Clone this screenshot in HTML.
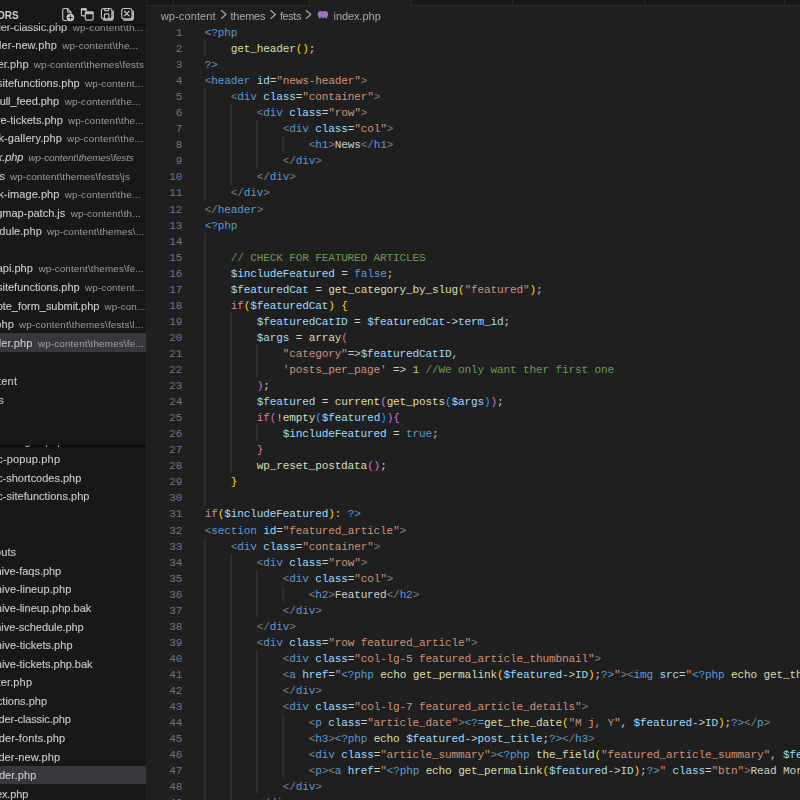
<!DOCTYPE html>
<html lang="en">
<head>
<meta charset="utf-8">
<title>index.php - Visual Studio Code</title>
<style>
html,body{margin:0;padding:0;width:800px;height:800px;overflow:hidden;background:#1f1f1f}
body{position:relative;font-family:"Liberation Sans",sans-serif;color:#ccc;-webkit-font-smoothing:antialiased}
#sidebar{will-change:transform;position:absolute;left:0;top:0;width:146px;height:800px;background:#181818;overflow:hidden;border-right:1px solid #232323}
#editor{position:absolute;left:147px;top:0;width:653px;height:800px;background:#1f1f1f;overflow:hidden}
.row{position:absolute;left:0;width:146px;height:19px;line-height:19px;white-space:pre;overflow:hidden}
.selbg{position:absolute;left:0;width:146px;height:18.583px;background:#37373d}
.nm{position:absolute;top:0;white-space:pre;font-family:"Liberation Sans",sans-serif;font-size:11.0px;color:#cccccc;-webkit-text-stroke:0.1px #cccccc;}
.ds{position:absolute;top:0.38px;white-space:pre;font-family:"Liberation Sans",sans-serif;font-size:9.9px;color:rgba(204,204,204,.72)}
.it{font-style:italic}
#hdr{position:absolute;left:0;top:0;width:146px;height:24px;overflow:hidden}
#hdr .ttl{position:absolute;right:127.4px;top:10px;font-size:10px;font-weight:bold;line-height:12px;color:#ccc;white-space:pre;letter-spacing:0px}
.shadow{position:absolute;left:0;width:146px;height:3px;background:linear-gradient(#000000aa,#00000000)}
.tabs{position:absolute;top:0;height:5px;background:#181818;border-bottom:1px solid #2b2b2b;overflow:hidden}
.tabs i{position:absolute;top:0;width:1px;height:5px;background:#2b2b2b}
#crumbs{will-change:transform;position:absolute;left:0;top:7px;height:18px;line-height:18px;font-size:11px;color:#a9a9a9;white-space:pre}
#crumbs span{position:absolute;top:0;letter-spacing:0.12px}
#crumbs svg{position:absolute}
.ln{position:absolute;left:0;width:35.3px;text-align:right;height:16px;line-height:16px;color:#6e7681;font-family:"Liberation Mono",monospace;font-size:11.1px;letter-spacing:-0.161px;white-space:pre}
.cl{-webkit-text-stroke:0px;position:absolute;left:57.7px;height:16px;line-height:16px;color:#ccc;font-family:"Liberation Mono",monospace;font-size:11.1px;letter-spacing:-0.161px;white-space:pre}
.gd{position:absolute;width:2px;background:#2e2e2e}
.k{color:#569cd6}.f{color:#dcdcaa}.g{color:#808080}.a{color:#9cdcfe}.s{color:#ce9178}.v{color:#9cdcfe}.c{color:#c586c0}.n{color:#b5cea8}.m{color:#6a9955}.b1{color:#ffd700}.b2{color:#da70d6}.b3{color:#179fff}
.ico{position:absolute}
</style>
</head>
<body>
<div id="sidebar">
<div id="hdr"><span class="ttl">OPEN EDITORS</span>
<svg class="ico" style="left:0;top:0" width="146" height="24" viewBox="0 0 146 24" fill="none" stroke="#c0c0c0" stroke-width="1.15" stroke-linecap="round" stroke-linejoin="round">
<path d="M67.4 8.5H64.4Q62.7 8.5 62.7 10.2V18.8Q62.7 20.5 64.4 20.5H66.6"/>
<path d="M67.4 8.5L71 12.1V13.6"/>
<path d="M67.4 8.7V11.3Q67.4 12.1 68.2 12.1H70.8"/>
<circle cx="70.4" cy="17.5" r="3.8" fill="#cdcdcd" stroke="none"/>
<path d="M70.5 15.2V19.8M68.2 17.5H72.8" stroke="#2a2a2a" stroke-width="1" stroke-linecap="butt"/>
<rect x="81.4" y="8.8" width="4.9" height="7.1" rx="1.3"/>
<rect x="81.4" y="8.8" width="4.9" height="1" rx="0.5" fill="#c0c0c0"/>
<rect x="85.3" y="12.1" width="7.8" height="8" rx="1.6" fill="#181818"/>
<rect x="85.3" y="12.1" width="7.8" height="1.5" rx="0.7" fill="#c0c0c0"/>
<rect x="101.4" y="8.5" width="10.5" height="10.4" rx="2.3"/>
<path d="M104.7 8.7V10.6H108.6V8.7"/>
<path d="M104.4 18.7V14.7Q104.4 13.9 105.2 13.9H108.1Q108.9 13.9 108.9 14.7V18.7"/>
<path d="M113.1 11.3V17.4Q113.1 20 110.5 20H103.8" stroke-width="1.6"/>
<rect x="121.7" y="8.5" width="10.3" height="10.4" rx="2.3"/>
<path d="M124.5 11.3L129.1 15.9M129.1 11.3L124.5 15.9" stroke-width="1.3"/>
<path d="M133.2 11.3V17.4Q133.2 20 130.6 20H123.9" stroke-width="1.6"/>
</svg>
</div>
<div class="row" style="top:18px"><span class="nm" style="right:79.02px;letter-spacing:-0.118px">header-classic.php</span><span class="ds" style="left:72.75px;letter-spacing:0.196px">wp-content\th...</span></div>
<div class="row" style="top:36px"><span class="nm" style="right:89.09px;letter-spacing:0.108px">header-new.php</span><span class="ds" style="left:62.25px;letter-spacing:0.184px">wp-content\the...</span></div>
<div class="row" style="top:55px"><span class="nm" style="right:117.43px;letter-spacing:0.073px">footer.php</span><span class="ds" style="left:33.75px;letter-spacing:0.140px">wp-content\themes\fests</span></div>
<div class="row" style="top:74px"><span class="nm" style="right:66.28px;letter-spacing:0.016px">etc-sitefunctions.php</span><span class="ds" style="left:85.00px;letter-spacing:0.143px">wp-content...</span></div>
<div class="row" style="top:92px"><span class="nm" style="right:87.05px;letter-spacing:-0.053px">pull_feed.php</span><span class="ds" style="left:64.70px;letter-spacing:0.170px">wp-content\the...</span></div>
<div class="row" style="top:111px"><span class="nm" style="right:83.20px;letter-spacing:0.002px">archive-tickets.php</span><span class="ds" style="left:68.00px;letter-spacing:0.176px">wp-content\the...</span></div>
<div class="row" style="top:129px"><span class="nm" style="right:84.00px;letter-spacing:0.103px">block-gallery.php</span><span class="ds" style="left:67.10px;letter-spacing:0.193px">wp-content\the...</span></div>
<div class="row" style="top:148px"><span class="nm it" style="right:122.68px;letter-spacing:-0.081px">index.php</span><span class="ds it" style="left:28.50px;letter-spacing:-0.080px">wp-content\themes\fests</span></div>
<div class="row" style="top:167px"><span class="nm" style="right:141.32px;letter-spacing:-0.320px">scripts.js</span><span class="ds" style="left:9.90px;letter-spacing:0.123px">wp-content\themes\fests\js</span></div>
<div class="row" style="top:185px"><span class="nm" style="right:86.54px;letter-spacing:0.059px">block-image.php</span><span class="ds" style="left:64.70px;letter-spacing:0.170px">wp-content\the...</span></div>
<div class="row" style="top:204px"><span class="nm" style="right:80.76px;letter-spacing:-0.005px">acf-gmap-patch.js</span><span class="ds" style="left:70.70px;letter-spacing:0.174px">wp-content\th...</span></div>
<div class="row" style="top:222px"><span class="nm" style="right:104.16px;letter-spacing:0.039px">schedule.php</span><span class="ds" style="left:46.90px;letter-spacing:0.147px">wp-content\themes\...</span></div>
<div class="row" style="top:259px"><span class="nm" style="right:113.19px;letter-spacing:0.011px">api.php</span><span class="ds" style="left:38.40px;letter-spacing:0.128px">wp-content\themes\fe...</span></div>
<div class="row" style="top:278px"><span class="nm" style="right:66.28px;letter-spacing:0.016px">etc-sitefunctions.php</span><span class="ds" style="left:85.00px;letter-spacing:0.143px">wp-content...</span></div>
<div class="row" style="top:297px"><span class="nm" style="right:46.63px;letter-spacing:-0.033px">vote_form_submit.php</span><span class="ds" style="left:104.60px;letter-spacing:0.069px">wp-con...</span></div>
<div class="row" style="top:315px"><span class="nm" style="right:131.75px;letter-spacing:0.247px">lineup.php</span><span class="ds" style="left:19.10px;letter-spacing:0.146px">wp-content\themes\fests\l...</span></div>
<div class="selbg" style="top:333.21px"></div>
<div class="row" style="top:334px"><span class="nm" style="right:113.49px;letter-spacing:0.112px">header.php</span><span class="ds" style="left:37.90px;letter-spacing:0.150px">wp-content\themes\fe...</span></div>
<div class="row" style="top:372px"><span class="nm" style="right:128.74px;letter-spacing:0.258px">wp-content</span></div>
<div class="row" style="top:391px"><span class="nm" style="right:143.14px;letter-spacing:-0.844px">themes</span></div>
<div class="shadow" style="top:444.6px"></div>
<div class="row" style="top:432px;clip-path:inset(13.40px 0 0 0)"><span class="nm" style="right:82.55px;letter-spacing:-0.049px">etc-images.php</span></div>
<div class="row" style="top:450px"><span class="nm" style="right:85.84px;letter-spacing:0.159px">etc-popup.php</span></div>
<div class="row" style="top:469px"><span class="nm" style="right:64.77px;letter-spacing:-0.018px">etc-shortcodes.php</span></div>
<div class="row" style="top:487px"><span class="nm" style="right:56.47px;letter-spacing:0.030px">etc-sitefunctions.php</span></div>
<div class="row" style="top:543px"><span class="nm" style="right:129.95px;letter-spacing:0.053px">layouts</span></div>
<div class="row" style="top:562px"><span class="nm" style="right:84.77px;letter-spacing:-0.015px">archive-faqs.php</span></div>
<div class="row" style="top:580px"><span class="nm" style="right:74.68px;letter-spacing:0.067px">archive-lineup.php</span></div>
<div class="row" style="top:599px"><span class="nm" style="right:54.74px;letter-spacing:0.005px">archive-lineup.php.bak</span></div>
<div class="row" style="top:618px"><span class="nm" style="right:62.30px;letter-spacing:-0.050px">archive-schedule.php</span></div>
<div class="row" style="top:636px"><span class="nm" style="right:73.48px;letter-spacing:0.020px">archive-tickets.php</span></div>
<div class="row" style="top:655px"><span class="nm" style="right:53.53px;letter-spacing:-0.030px">archive-tickets.php.bak</span></div>
<div class="row" style="top:673px"><span class="nm" style="right:113.84px;letter-spacing:0.160px">footer.php</span></div>
<div class="row" style="top:692px"><span class="nm" style="right:98.99px;letter-spacing:0.006px">functions.php</span></div>
<div class="row" style="top:710px"><span class="nm" style="right:75.37px;letter-spacing:-0.118px">header-classic.php</span></div>
<div class="row" style="top:729px"><span class="nm" style="right:80.89px;letter-spacing:0.115px">header-fonts.php</span></div>
<div class="row" style="top:748px"><span class="nm" style="right:85.89px;letter-spacing:0.108px">header-new.php</span></div>
<div class="selbg" style="top:765.61px"></div>
<div class="row" style="top:766px"><span class="nm" style="right:109.64px;letter-spacing:0.112px">header.php</span></div>
<div class="row" style="top:785px"><span class="nm" style="right:117.83px;letter-spacing:-0.128px">index.php</span></div>
<div class="shadow" style="top:24px"></div>
</div>
<div id="editor">
<div class="tabs" style="left:0.00px;width:162.50px"><i style="left:26.00px"></i><i style="left:161.50px"></i></div>
<div class="tabs" style="left:263.60px;width:389.40px"><i style="left:0.00px"></i><i style="left:101.90px"></i><i style="left:233.40px"></i><i style="left:373.40px"></i></div>
<div id="crumbs"><span style="left:13.80px;letter-spacing:0.109px">wp-content</span><span style="left:83.50px;letter-spacing:-0.213px">themes</span><span style="left:132.90px;letter-spacing:-0.427px">fests</span><span style="left:186.60px;letter-spacing:-0.069px">index.php</span><svg style="left:0;top:0" width="240" height="18" viewBox="147 7 240 18" fill="none" stroke="#a6a6a6" stroke-width="1.15" stroke-linecap="round" stroke-linejoin="round">
<path d="M221.4 10.5L226 14.5 221.4 18.5"/>
<path d="M270.8 10.5L275.4 14.5 270.8 18.5"/>
<path d="M306.2 10.5L310.8 14.5 306.2 18.5"/>
<g stroke="none" fill="#a074c4">
<ellipse cx="320.6" cy="14" rx="2.9" ry="3"/>
<ellipse cx="324.6" cy="14.2" rx="3.4" ry="3.1"/>
<rect x="318.6" y="14" width="2.3" height="4.3" rx="0.4"/>
<rect x="321.8" y="15" width="2" height="3.3" rx="0.4"/>
<rect x="325" y="15" width="2.2" height="3.3" rx="0.4"/>
<circle cx="322.4" cy="13.1" r="0.5" fill="#6d4f9c"/>
</g>
</svg>
</div>
<div class="gd" style="left:57px;top:40.05px;height:16.05px"></div><div class="gd" style="left:57px;top:88.20px;height:112.34px"></div><div class="gd" style="left:57px;top:232.64px;height:272.83px"></div><div class="gd" style="left:57px;top:537.57px;height:288.88px"></div><div class="gd" style="left:83px;top:104.25px;height:80.25px"></div><div class="gd" style="left:83px;top:312.88px;height:160.49px"></div><div class="gd" style="left:83px;top:553.62px;height:256.78px"></div><div class="gd" style="left:109px;top:120.29px;height:48.15px"></div><div class="gd" style="left:109px;top:344.98px;height:32.10px"></div><div class="gd" style="left:109px;top:425.22px;height:16.05px"></div><div class="gd" style="left:109px;top:569.67px;height:48.15px"></div><div class="gd" style="left:109px;top:649.91px;height:144.44px"></div><div class="gd" style="left:135px;top:136.34px;height:16.05px"></div><div class="gd" style="left:135px;top:585.72px;height:16.05px"></div><div class="gd" style="left:135px;top:714.11px;height:64.20px"></div>
<div class="ln" style="top:25px">1</div><div class="cl" style="top:25px"><span class="k">&lt;?php</span></div>
<div class="ln" style="top:41px">2</div><div class="cl" style="top:41px">    <span class="f">get_header</span><span class="b1">()</span>;</div>
<div class="ln" style="top:57px">3</div><div class="cl" style="top:57px"><span class="k">?&gt;</span></div>
<div class="ln" style="top:73px">4</div><div class="cl" style="top:73px"><span class="g">&lt;</span><span class="k">header</span> <span class="a">id</span>=<span class="s">"news-header"</span><span class="g">&gt;</span></div>
<div class="ln" style="top:89px">5</div><div class="cl" style="top:89px">    <span class="g">&lt;</span><span class="k">div</span> <span class="a">class</span>=<span class="s">"container"</span><span class="g">&gt;</span></div>
<div class="ln" style="top:105px">6</div><div class="cl" style="top:105px">        <span class="g">&lt;</span><span class="k">div</span> <span class="a">class</span>=<span class="s">"row"</span><span class="g">&gt;</span></div>
<div class="ln" style="top:121px">7</div><div class="cl" style="top:121px">            <span class="g">&lt;</span><span class="k">div</span> <span class="a">class</span>=<span class="s">"col"</span><span class="g">&gt;</span></div>
<div class="ln" style="top:137px">8</div><div class="cl" style="top:137px">                <span class="g">&lt;</span><span class="k">h1</span><span class="g">&gt;</span>News<span class="g">&lt;/</span><span class="k">h1</span><span class="g">&gt;</span></div>
<div class="ln" style="top:153px">9</div><div class="cl" style="top:153px">            <span class="g">&lt;/</span><span class="k">div</span><span class="g">&gt;</span></div>
<div class="ln" style="top:169px">10</div><div class="cl" style="top:169px">        <span class="g">&lt;/</span><span class="k">div</span><span class="g">&gt;</span></div>
<div class="ln" style="top:185px">11</div><div class="cl" style="top:185px">    <span class="g">&lt;/</span><span class="k">div</span><span class="g">&gt;</span></div>
<div class="ln" style="top:202px">12</div><div class="cl" style="top:202px"><span class="g">&lt;/</span><span class="k">header</span><span class="g">&gt;</span></div>
<div class="ln" style="top:218px">13</div><div class="cl" style="top:218px"><span class="k">&lt;?php</span></div>
<div class="ln" style="top:234px">14</div>
<div class="ln" style="top:250px">15</div><div class="cl" style="top:250px">    <span class="m">// CHECK FOR FEATURED ARTICLES</span></div>
<div class="ln" style="top:266px">16</div><div class="cl" style="top:266px">    <span class="v">$includeFeatured</span> = <span class="k">false</span>;</div>
<div class="ln" style="top:282px">17</div><div class="cl" style="top:282px">    <span class="v">$featuredCat</span> = <span class="f">get_category_by_slug</span><span class="b1">(</span><span class="s">"featured"</span><span class="b1">)</span>;</div>
<div class="ln" style="top:298px">18</div><div class="cl" style="top:298px">    <span class="c">if</span><span class="b1">(</span><span class="v">$featuredCat</span><span class="b1">)</span> <span class="b1">{</span></div>
<div class="ln" style="top:314px">19</div><div class="cl" style="top:314px">        <span class="v">$featuredCatID</span> = <span class="v">$featuredCat</span>-&gt;<span class="v">term_id</span>;</div>
<div class="ln" style="top:330px">20</div><div class="cl" style="top:330px">        <span class="v">$args</span> = <span class="f">array</span><span class="b2">(</span></div>
<div class="ln" style="top:346px">21</div><div class="cl" style="top:346px">            <span class="s">"category"</span>=&gt;<span class="v">$featuredCatID</span>,</div>
<div class="ln" style="top:362px">22</div><div class="cl" style="top:362px">            <span class="s">'posts_per_page'</span> =&gt; <span class="n">1</span> <span class="m">//We only want ther first one</span></div>
<div class="ln" style="top:378px">23</div><div class="cl" style="top:378px">        <span class="b2">)</span>;</div>
<div class="ln" style="top:394px">24</div><div class="cl" style="top:394px">        <span class="v">$featured</span> = <span class="f">current</span><span class="b2">(</span><span class="f">get_posts</span><span class="b3">(</span><span class="v">$args</span><span class="b3">)</span><span class="b2">)</span>;</div>
<div class="ln" style="top:410px">25</div><div class="cl" style="top:410px">        <span class="c">if</span><span class="b2">(</span>!<span class="f">empty</span><span class="b3">(</span><span class="v">$featured</span><span class="b3">)</span><span class="b2">)</span><span class="b2">{</span></div>
<div class="ln" style="top:426px">26</div><div class="cl" style="top:426px">            <span class="v">$includeFeatured</span> = <span class="k">true</span>;</div>
<div class="ln" style="top:442px">27</div><div class="cl" style="top:442px">        <span class="b2">}</span></div>
<div class="ln" style="top:458px">28</div><div class="cl" style="top:458px">        <span class="f">wp_reset_postdata</span><span class="b2">()</span>;</div>
<div class="ln" style="top:474px">29</div><div class="cl" style="top:474px">    <span class="b1">}</span></div>
<div class="ln" style="top:490px">30</div>
<div class="ln" style="top:506px">31</div><div class="cl" style="top:506px"><span class="c">if</span><span class="b1">(</span><span class="v">$includeFeatured</span><span class="b1">)</span>: <span class="k">?&gt;</span></div>
<div class="ln" style="top:523px">32</div><div class="cl" style="top:523px"><span class="g">&lt;</span><span class="k">section</span> <span class="a">id</span>=<span class="s">"featured_article"</span><span class="g">&gt;</span></div>
<div class="ln" style="top:539px">33</div><div class="cl" style="top:539px">    <span class="g">&lt;</span><span class="k">div</span> <span class="a">class</span>=<span class="s">"container"</span><span class="g">&gt;</span></div>
<div class="ln" style="top:555px">34</div><div class="cl" style="top:555px">        <span class="g">&lt;</span><span class="k">div</span> <span class="a">class</span>=<span class="s">"row"</span><span class="g">&gt;</span></div>
<div class="ln" style="top:571px">35</div><div class="cl" style="top:571px">            <span class="g">&lt;</span><span class="k">div</span> <span class="a">class</span>=<span class="s">"col"</span><span class="g">&gt;</span></div>
<div class="ln" style="top:587px">36</div><div class="cl" style="top:587px">                <span class="g">&lt;</span><span class="k">h2</span><span class="g">&gt;</span>Featured<span class="g">&lt;/</span><span class="k">h2</span><span class="g">&gt;</span></div>
<div class="ln" style="top:603px">37</div><div class="cl" style="top:603px">            <span class="g">&lt;/</span><span class="k">div</span><span class="g">&gt;</span></div>
<div class="ln" style="top:619px">38</div><div class="cl" style="top:619px">        <span class="g">&lt;/</span><span class="k">div</span><span class="g">&gt;</span></div>
<div class="ln" style="top:635px">39</div><div class="cl" style="top:635px">        <span class="g">&lt;</span><span class="k">div</span> <span class="a">class</span>=<span class="s">"row featured_article"</span><span class="g">&gt;</span></div>
<div class="ln" style="top:651px">40</div><div class="cl" style="top:651px">            <span class="g">&lt;</span><span class="k">div</span> <span class="a">class</span>=<span class="s">"col-lg-5 featured_article_thumbnail"</span><span class="g">&gt;</span></div>
<div class="ln" style="top:667px">41</div><div class="cl" style="top:667px">            <span class="g">&lt;</span><span class="k">a</span> <span class="a">href</span>=<span class="s">"</span><span class="k">&lt;?php</span> <span class="f">echo</span> <span class="f">get_permalink</span><span class="b1">(</span><span class="v">$featured</span>-&gt;<span class="v">ID</span><span class="b1">)</span>;<span class="k">?&gt;</span><span class="s">"</span><span class="g">&gt;</span><span class="g">&lt;</span><span class="k">img</span> <span class="a">src</span>=<span class="s">"</span><span class="k">&lt;?php</span> <span class="f">echo</span> <span class="f">get_the_post_thumbnail_url</span><span class="b1">(</span><span class="v">$featured</span>-&gt;<span class="v">ID</span><span class="b1">)</span>;<span class="k">?&gt;</span><span class="s">"</span><span class="g">&gt;</span></div>
<div class="ln" style="top:683px">42</div><div class="cl" style="top:683px">            <span class="g">&lt;/</span><span class="k">div</span><span class="g">&gt;</span></div>
<div class="ln" style="top:699px">43</div><div class="cl" style="top:699px">            <span class="g">&lt;</span><span class="k">div</span> <span class="a">class</span>=<span class="s">"col-lg-7 featured_article_details"</span><span class="g">&gt;</span></div>
<div class="ln" style="top:715px">44</div><div class="cl" style="top:715px">                <span class="g">&lt;</span><span class="k">p</span> <span class="a">class</span>=<span class="s">"article_date"</span><span class="g">&gt;</span><span class="k">&lt;?=</span><span class="f">get_the_date</span><span class="b1">(</span><span class="s">"M j, Y"</span>, <span class="v">$featured</span>-&gt;<span class="v">ID</span><span class="b1">)</span>;<span class="k">?&gt;</span><span class="g">&lt;/</span><span class="k">p</span><span class="g">&gt;</span></div>
<div class="ln" style="top:731px">45</div><div class="cl" style="top:731px">                <span class="g">&lt;</span><span class="k">h3</span><span class="g">&gt;</span><span class="k">&lt;?php</span> <span class="f">echo</span> <span class="v">$featured</span>-&gt;<span class="v">post_title</span>;<span class="k">?&gt;</span><span class="g">&lt;/</span><span class="k">h3</span><span class="g">&gt;</span></div>
<div class="ln" style="top:747px">46</div><div class="cl" style="top:747px">                <span class="g">&lt;</span><span class="k">div</span> <span class="a">class</span>=<span class="s">"article_summary"</span><span class="g">&gt;</span><span class="k">&lt;?php</span> <span class="f">the_field</span><span class="b1">(</span><span class="s">"featured_article_summary"</span>, <span class="v">$featured</span>-&gt;<span class="v">ID</span><span class="b1">)</span>;<span class="k">?&gt;</span><span class="g">&lt;/</span><span class="k">div</span><span class="g">&gt;</span></div>
<div class="ln" style="top:763px">47</div><div class="cl" style="top:763px">                <span class="g">&lt;</span><span class="k">p</span><span class="g">&gt;</span><span class="g">&lt;</span><span class="k">a</span> <span class="a">href</span>=<span class="s">"</span><span class="k">&lt;?php</span> <span class="f">echo</span> <span class="f">get_permalink</span><span class="b1">(</span><span class="v">$featured</span>-&gt;<span class="v">ID</span><span class="b1">)</span>;<span class="k">?&gt;</span><span class="s">"</span> <span class="a">class</span>=<span class="s">"btn"</span><span class="g">&gt;</span>Read More<span class="g">&lt;/</span><span class="k">a</span><span class="g">&gt;</span><span class="g">&lt;/</span><span class="k">p</span><span class="g">&gt;</span></div>
<div class="ln" style="top:779px">48</div><div class="cl" style="top:779px">            <span class="g">&lt;/</span><span class="k">div</span><span class="g">&gt;</span></div>
<div class="ln" style="top:795px">49</div><div class="cl" style="top:795px">        <span class="g">&lt;/</span><span class="k">div</span><span class="g">&gt;</span></div>
<div class="ln" style="top:811px">50</div><div class="cl" style="top:811px">    <span class="g">&lt;/</span><span class="k">div</span><span class="g">&gt;</span></div>
</div>
</body>
</html>
